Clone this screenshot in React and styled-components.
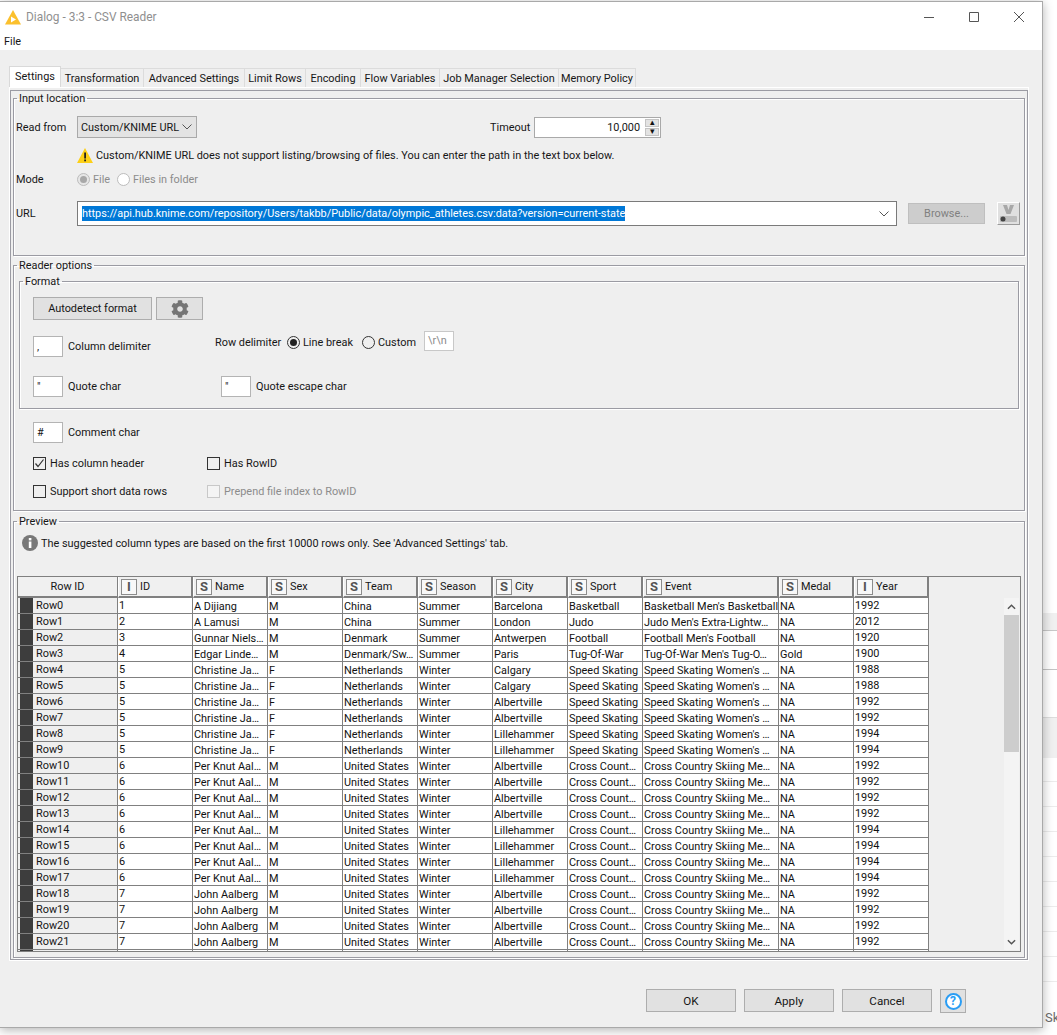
import React from "react";
import styled, { createGlobalStyle } from "styled-components";
import { FaCog } from "react-icons/fa";

const GlobalStyle = createGlobalStyle`
html, body {
    margin: 0;
    padding: 0;
    background: #fff;
}
body {
    font-family: Roboto, "Liberation Sans", sans-serif;
    font-size: 10.9px;
    color: #161616;
}
* {
    box-sizing: border-box;
}
`;

const TABS = [
    { name: "Settings", width: 52, active: true },
    { name: "Transformation", width: 83 },
    { name: "Advanced Settings", width: 101 },
    { name: "Limit Rows", width: 61 },
    { name: "Encoding", width: 55 },
    { name: "Flow Variables", width: 79 },
    { name: "Job Manager Selection", width: 119 },
    { name: "Memory Policy", width: 77 },
];

const COLUMNS = [
    { name: "ID", type: "I", width: 75 },
    { name: "Name", type: "S", width: 75 },
    { name: "Sex", type: "S", width: 75 },
    { name: "Team", type: "S", width: 75 },
    { name: "Season", type: "S", width: 75 },
    { name: "City", type: "S", width: 75 },
    { name: "Sport", type: "S", width: 75 },
    { name: "Event", type: "S", width: 136 },
    { name: "Medal", type: "S", width: 75 },
    { name: "Year", type: "I", width: 75 },
];

const skate = (city, year) => [5, "Christine Ja…", "F", "Netherlands", "Winter", city, "Speed Skating", "Speed Skating Women's …", "NA", year];
const ski = (city, year) => [6, "Per Knut Aal…", "M", "United States", "Winter", city, "Cross Count…", "Cross Country Skiing Me…", "NA", year];
const john = () => [7, "John Aalberg", "M", "United States", "Winter", "Albertville", "Cross Count…", "Cross Country Skiing Me…", "NA", 1992];

const ROWS = [
    [1, "A Dijiang", "M", "China", "Summer", "Barcelona", "Basketball", "Basketball Men's Basketball", "NA", 1992],
    [2, "A Lamusi", "M", "China", "Summer", "London", "Judo", "Judo Men's Extra-Lightw…", "NA", 2012],
    [3, "Gunnar Niels…", "M", "Denmark", "Summer", "Antwerpen", "Football", "Football Men's Football", "NA", 1920],
    [4, "Edgar Linde…", "M", "Denmark/Sw…", "Summer", "Paris", "Tug-Of-War", "Tug-Of-War Men's Tug-O…", "Gold", 1900],
    skate("Calgary", 1988),
    skate("Calgary", 1988),
    skate("Albertville", 1992),
    skate("Albertville", 1992),
    skate("Lillehammer", 1994),
    skate("Lillehammer", 1994),
    ski("Albertville", 1992),
    ski("Albertville", 1992),
    ski("Albertville", 1992),
    ski("Albertville", 1992),
    ski("Lillehammer", 1994),
    ski("Lillehammer", 1994),
    ski("Lillehammer", 1994),
    ski("Lillehammer", 1994),
    john(),
    john(),
    john(),
    john(),
];

const BACK_ROWS = [
    { height: 613 },
    { height: 18, band: true, line: "#c8c8c8" },
    { height: 39, line: "#c4c4c4" },
    { height: 47 },
    { height: 41, band: true, top: true },
    { height: 24, line: "#ececec" },
    { height: 25, line: "#ececec" },
    { height: 25, line: "#ececec" },
    { height: 25, line: "#ececec" },
    { height: 25, line: "#ececec" },
    { height: 25, line: "#ececec" },
    { height: 25, line: "#ececec" },
    { height: 25, line: "#ececec" },
    { height: 25, line: "#ececec" },
];

export default function App() {
    return (
        <Desktop>
            <GlobalStyle />
            <Window>
                <TitleBar>
                    <TitleIcon viewBox="0 0 16 15">
                        <path d="M8 0 L16 14.5 L0 14.5 Z" fill="#fbc02d" />
                        <path d="M6 6.5 L11 9.5 L6 12.5 Z" fill="#fff" />
                    </TitleIcon>
                    <TitleText>Dialog - 3:3 - CSV Reader</TitleText>
                    <WindowButtons>
                        <WindowButton viewBox="0 0 10 10"><path d="M0 5.5 H10" /></WindowButton>
                        <WindowButton viewBox="0 0 10 10"><path d="M.5 .5 H9.5 V9.5 H.5 Z" /></WindowButton>
                        <WindowButton viewBox="0 0 10 10"><path d="M0 0 L10 10 M10 0 L0 10" /></WindowButton>
                    </WindowButtons>
                </TitleBar>
                <MenuBar>File</MenuBar>
                <Body>
                    <TabStrip>
                        {TABS.map((tab) => (
                            <Tab key={tab.name} $width={tab.width} $active={tab.active}>{tab.name}</Tab>
                        ))}
                    </TabStrip>
                    <TabPane>
                        <PaneFrame>
                            <Group $height={165}>
                                <Legend>Input location</Legend>
                                <GroupBody $pad={2}>
                                    <FormRow $top={11} $height={22}>
                                        <RowLabel>Read from</RowLabel>
                                        <SelectBox>
                                            Custom/KNIME URL
                                            <Chevron />
                                        </SelectBox>
                                        <TimeoutLabel>Timeout</TimeoutLabel>
                                        <Spinner>
                                            <SpinnerValue>10,000</SpinnerValue>
                                            <SpinnerButtons>
                                                <SpinnerButton>▴</SpinnerButton>
                                                <SpinnerButton>▾</SpinnerButton>
                                            </SpinnerButtons>
                                        </Spinner>
                                    </FormRow>
                                    <FormRow $top={9} $height={16}>
                                        <RowLabel />
                                        <WarningIcon viewBox="0 0 16 15">
                                            <path d="M8 0 L16 15 L0 15 Z" fill="#fdd017" />
                                            <rect x="7.2" y="4.5" width="1.8" height="6" fill="#222" />
                                            <rect x="7.2" y="11.5" width="1.8" height="1.8" fill="#222" />
                                        </WarningIcon>
                                        <span>Custom/KNIME URL does not support listing/browsing of files. You can enter the path in the text box below.</span>
                                    </FormRow>
                                    <FormRow $top={8} $height={16}>
                                        <RowLabel>Mode</RowLabel>
                                        <Radio $checked $disabled />
                                        <OptionText $disabled $width={24}>File</OptionText>
                                        <Radio $disabled />
                                        <OptionText $disabled>Files in folder</OptionText>
                                    </FormRow>
                                    <FormRow $top={14} $height={25}>
                                        <RowLabel>URL</RowLabel>
                                        <UrlBox>
                                            <SelectedText>https://api.hub.knime.com/repository/Users/takbb/Public/data/olympic_athletes.csv:data?version=current-state</SelectedText>
                                            <Chevron />
                                        </UrlBox>
                                        <BrowseButton>Browse...</BrowseButton>
                                        <FlowVarButton>
                                            <svg width="21" height="21" viewBox="0 0 21 21">
                                                <path d="M5 2 H9 L10.5 7 L12 2 H16 L12.5 11 H8.5 Z" fill="#a8a8a8" />
                                                <rect x="2" y="13" width="17" height="6" rx="1" fill="#bdbdbd" />
                                                <circle cx="5" cy="16" r="2.5" fill="#444" />
                                            </svg>
                                        </FlowVarButton>
                                    </FormRow>
                                </GroupBody>
                            </Group>
                            <Group $top={2} $height={253}>
                                <Legend>Reader options</Legend>
                                <Group $top={2} $side={5} $height={135}>
                                    <Legend>Format</Legend>
                                    <GroupBody $pad={13}>
                                        <FormRow $top={9} $height={23}>
                                            <PlainButton $width={119}>Autodetect format</PlainButton>
                                            <PlainButton $width={47} $left={4}><FaCog size={18} color="#757575" /></PlainButton>
                                        </FormRow>
                                        <FormRow $top={11} $height={26} $start>
                                            <CharField $width={182} $top={5}>
                                                <CharBox>,</CharBox>
                                                <span>Column delimiter</span>
                                            </CharField>
                                            <RowDelimiter>
                                                <DelimiterLabel>Row delimiter</DelimiterLabel>
                                                <Radio $checked />
                                                <OptionText $width={59}>Line break</OptionText>
                                                <Radio />
                                                <OptionText $width={46}>Custom</OptionText>
                                                <CustomBox>\r\n</CustomBox>
                                            </RowDelimiter>
                                        </FormRow>
                                        <FormRow $top={19} $height={21} $start>
                                            <CharField $width={188}>
                                                <CharBox>"</CharBox>
                                                <span>Quote char</span>
                                            </CharField>
                                            <CharField>
                                                <CharBox>"</CharBox>
                                                <span>Quote escape char</span>
                                            </CharField>
                                        </FormRow>
                                    </GroupBody>
                                </Group>
                                <GroupBody $pad={19}>
                                    <OptionBlock>
                                        <CharField>
                                            <CharBox>#</CharBox>
                                            <span>Comment char</span>
                                        </CharField>
                                        <CheckRow $top={14}>
                                            <CheckCell>
                                                <CheckBox $checked>
                                                    <svg width="11" height="11" viewBox="0 0 11 11">
                                                        <path d="M1.5 5.5 L4 8.5 L9.5 1.5" fill="none" stroke="#333" strokeWidth="1.2" />
                                                    </svg>
                                                </CheckBox>
                                                Has column header
                                            </CheckCell>
                                            <CheckCell>
                                                <CheckBox />
                                                Has RowID
                                            </CheckCell>
                                        </CheckRow>
                                        <CheckRow $top={15}>
                                            <CheckCell>
                                                <CheckBox />
                                                Support short data rows
                                            </CheckCell>
                                            <CheckCell $disabled>
                                                <CheckBox $disabled />
                                                Prepend file index to RowID
                                            </CheckCell>
                                        </CheckRow>
                                    </OptionBlock>
                                </GroupBody>
                            </Group>
                            <Group $top={3}>
                                <Legend>Preview</Legend>
                                <GroupBody $pad={3} $bottom={5}>
                                    <InfoRow>
                                        <svg width="16" height="16" viewBox="0 0 16 16">
                                            <circle cx="8" cy="8" r="8" fill="#787878" />
                                            <rect x="6.8" y="6.5" width="2.6" height="6.5" fill="#fff" />
                                            <rect x="6.8" y="3" width="2.6" height="2.4" fill="#fff" />
                                        </svg>
                                        The suggested column types are based on the first 10000 rows only. See 'Advanced Settings' tab.
                                    </InfoRow>
                                    <TableFrame>
                                        <DataTable>
                                            <thead>
                                                <tr>
                                                    <RowIdHead>Row ID</RowIdHead>
                                                    {COLUMNS.map((col) => (
                                                        <HeadCell key={col.name} $width={col.width}>
                                                            <HeadContent>
                                                                <TypeBadge>{col.type}</TypeBadge>
                                                                {col.name}
                                                            </HeadContent>
                                                        </HeadCell>
                                                    ))}
                                                </tr>
                                            </thead>
                                            <tbody>
                                                {ROWS.map((row, index) => (
                                                    <tr key={index}>
                                                        <RowIdCell>
                                                            <RowIdContent>
                                                                <RowMarker />
                                                                Row{index}
                                                            </RowIdContent>
                                                        </RowIdCell>
                                                        {row.map((value, i) => (
                                                            <DataCell key={i} $number={typeof value === "number"}>{value}</DataCell>
                                                        ))}
                                                    </tr>
                                                ))}
                                                {/* next row, only its top edge shows above the frame */}
                                                <tr>
                                                    <RowIdCell>
                                                        <RowIdContent>
                                                            <RowMarker />
                                                        </RowIdContent>
                                                    </RowIdCell>
                                                    {COLUMNS.map((col) => (
                                                        <DataCell key={col.name} />
                                                    ))}
                                                </tr>
                                            </tbody>
                                        </DataTable>
                                        <ScrollTrack>
                                            <ScrollArrow viewBox="0 0 10 6"><path d="M1 5 L5 1 L9 5" /></ScrollArrow>
                                            <ScrollThumb />
                                            <ScrollArrow viewBox="0 0 10 6"><path d="M1 1 L5 5 L9 1" /></ScrollArrow>
                                        </ScrollTrack>
                                    </TableFrame>
                                </GroupBody>
                            </Group>
                        </PaneFrame>
                    </TabPane>
                    <Footer>
                        <FooterButton>OK</FooterButton>
                        <FooterButton>Apply</FooterButton>
                        <FooterButton>Cancel</FooterButton>
                        <HelpButton><HelpGlyph>?</HelpGlyph></HelpButton>
                    </Footer>
                </Body>
            </Window>
            <Backdrop>
                {BACK_ROWS.map((row, i) => (
                    <BackRow key={i} $height={row.height} $band={row.band} $line={row.line} $top={row.top} />
                ))}
                <BackText>Sk</BackText>
            </Backdrop>
        </Desktop>
    );
}

function Chevron() {
    return (
        <ChevronIcon viewBox="0 0 10 6">
            <path d="M.5 .5 L5 5 L9.5 .5" />
        </ChevronIcon>
    );
}

const Desktop = styled.div`
display: flex;
width: 1057px;
height: 1035px;
overflow: hidden;
background: #fff;
`;

const Window = styled.div`
position: relative;
z-index: 1;
display: flex;
flex-direction: column;
flex: none;
width: 1043px;
height: 1027px;
margin-top: 1px;
border-top: 1px solid #a9a9a9;
border-right: 1px solid #a9a9a9;
border-bottom: 1px solid #a9a9a9;
box-shadow: 0 2px 10px rgba(0, 0, 0, 0.3);
background: #fff;
`;

const TitleBar = styled.div`
display: flex;
align-items: center;
height: 29px;
padding-left: 5px;
`;

const TitleIcon = styled.svg`
width: 16px;
height: 15px;
margin-top: 1px;
`;

const TitleText = styled.span`
margin-left: 5px;
font-size: 11.9px;
color: #8f8f8f;
`;

const WindowButtons = styled.div`
display: flex;
gap: 35px;
margin-left: auto;
margin-right: 18px;
`;

const WindowButton = styled.svg`
width: 10px;
height: 10px;
fill: none;
stroke: #555;
stroke-width: 1;
`;

const MenuBar = styled.div`
height: 19px;
padding-left: 4px;
line-height: 22px;
`;

const Body = styled.div`
flex: 1;
display: flex;
flex-direction: column;
padding: 16px 13px 0 9px;
background: #efefef;
`;

const TabStrip = styled.div`
display: flex;
align-items: flex-end;
height: 21px;
`;

const Tab = styled.div`
display: flex;
align-items: center;
justify-content: center;
width: ${(p) => p.$width}px;
height: ${(p) => (p.$active ? 21 : 19)}px;
padding-bottom: ${(p) => (p.$active ? 2 : 0)}px;
border: 1px solid ${(p) => (p.$active ? "#d9d9d9" : "#dcdcdc")};
border-bottom: none;
border-left: ${(p) => (p.$active ? "1px solid #d9d9d9" : "none")};
background: ${(p) => (p.$active ? "#fff" : "#efefef")};
white-space: nowrap;
`;

const TabPane = styled.div`
border: 1px solid #fff;
padding-top: 2px;
`;

const PaneFrame = styled.div`
border: 1px solid #9b9ba3;
padding: 0 2px 1px;
`;

const Group = styled.fieldset`
min-width: 0;
margin: ${(p) => p.$top || 0}px ${(p) => p.$side || 0}px 0;
padding: 0;
border: 1px solid #9b9ba3;
box-shadow: inset 1px 1px 0 #fff, 1px 1px 0 #fff;
height: ${(p) => (p.$height ? `${p.$height}px` : "auto")};
`;

const GroupBody = styled.div`
padding: 0 0 ${(p) => p.$bottom || 0}px ${(p) => p.$pad}px;
`;

const Legend = styled.legend`
padding: 0 2px;
margin-left: 3px;
height: 14px;
line-height: 16px;
`;

const FormRow = styled.div`
display: flex;
align-items: ${(p) => (p.$start ? "flex-start" : "center")};
height: ${(p) => p.$height}px;
margin-top: ${(p) => p.$top}px;
`;

const RowLabel = styled.span`
flex: none;
width: 61px;
`;

const ChevronIcon = styled.svg`
flex: none;
width: 10px;
height: 6px;
fill: none;
stroke: #555;
stroke-width: 1;
`;

const SelectBox = styled.div`
display: flex;
align-items: center;
justify-content: space-between;
width: 120px;
height: 22px;
padding: 0 4px 0 3px;
border: 1px solid #a9a9a9;
background: #e3e3e3;
white-space: nowrap;
`;

const TimeoutLabel = styled.span`
width: 44px;
margin-left: 293px;
`;

const Spinner = styled.div`
display: flex;
align-items: stretch;
width: 127px;
height: 21px;
border: 1px solid #a9a9a9;
background: #fff;
`;

const SpinnerValue = styled.div`
flex: 1;
padding-right: 4px;
text-align: right;
line-height: 19px;
`;

const SpinnerButtons = styled.div`
display: flex;
flex-direction: column;
justify-content: center;
gap: 1px;
width: 16px;
padding: 1px;
`;

const SpinnerButton = styled.div`
flex: 1;
display: flex;
align-items: center;
justify-content: center;
background: #e3e3e3;
border: 1px solid #c4c4c4;
font-size: 9px;
line-height: 1;
color: #111;
overflow: hidden;
`;

const WarningIcon = styled.svg`
flex: none;
width: 16px;
height: 15px;
margin-right: 3px;
`;

const Radio = styled.span`
position: relative;
flex: none;
width: 13px;
height: 13px;
border: 1px solid ${(p) => (p.$disabled ? "#bcbcbc" : "#333")};
border-radius: 50%;
background: ${(p) => (p.$disabled && p.$checked ? "#e6e6e6" : p.$disabled ? "#fff" : "transparent")};
&::after {
    content: "";
    display: ${(p) => (p.$checked ? "block" : "none")};
    position: absolute;
    inset: 2px;
    border-radius: 50%;
    background: ${(p) => (p.$disabled ? "#a8a8a8" : "#222")};
}
`;

const OptionText = styled.span`
flex: none;
width: ${(p) => (p.$width ? `${p.$width}px` : "auto")};
margin-left: 3px;
color: ${(p) => (p.$disabled ? "#8c8c8c" : "inherit")};
`;

const UrlBox = styled.div`
display: flex;
align-items: center;
justify-content: space-between;
flex: none;
width: 820px;
height: 25px;
padding: 0 7px 0 4px;
border: 1px solid #7a7a7a;
background: #fff;
`;

const SelectedText = styled.span`
height: 15px;
line-height: 15px;
background: #0078d7;
color: #fff;
white-space: nowrap;
`;

const BrowseButton = styled.div`
display: flex;
align-items: center;
justify-content: center;
flex: none;
width: 77px;
height: 21px;
margin-left: 11px;
border: 1px solid #bfbfbf;
background: #cdcdcd;
color: #808080;
`;

const FlowVarButton = styled.div`
display: flex;
align-items: center;
justify-content: center;
flex: none;
width: 23px;
height: 23px;
margin-left: 12px;
border: 1px solid #fff;
border-right-color: #9a9a9a;
border-bottom-color: #9a9a9a;
background: #e0e0e0;
`;

const PlainButton = styled.div`
display: flex;
align-items: center;
justify-content: center;
width: ${(p) => p.$width}px;
height: 23px;
margin-left: ${(p) => p.$left || 0}px;
border: 1px solid #adadad;
background: #e1e1e1;
`;

const CharField = styled.div`
display: flex;
align-items: center;
gap: 5px;
width: ${(p) => (p.$width ? `${p.$width}px` : "auto")};
margin-top: ${(p) => p.$top || 0}px;
`;

const CharBox = styled.div`
width: 30px;
height: 21px;
padding-left: 3px;
border: 1px solid #b4b4b4;
background: #fff;
line-height: 19px;
`;

const RowDelimiter = styled.div`
display: flex;
align-items: center;
height: 22px;
`;

const DelimiterLabel = styled.span`
flex: none;
width: 72px;
`;

const CustomBox = styled.div`
align-self: flex-start;
width: 30px;
height: 20px;
padding-left: 3px;
border: 1px solid #c8c8c8;
background: #fff;
color: #8c8c8c;
line-height: 18px;
`;

const OptionBlock = styled.div`
margin-top: 13px;
`;

const CheckRow = styled.div`
display: grid;
grid-template-columns: 174px 1fr;
margin-top: ${(p) => p.$top}px;
`;

const CheckCell = styled.label`
display: flex;
align-items: center;
gap: 4px;
height: 13px;
color: ${(p) => (p.$disabled ? "#8c8c8c" : "inherit")};
`;

const CheckBox = styled.span`
display: flex;
align-items: center;
justify-content: center;
flex: none;
width: 13px;
height: 13px;
border: 1px solid ${(p) => (p.$disabled ? "#c8c8c8" : "#333")};
background: ${(p) => (p.$disabled ? "#f4f4f4" : "transparent")};
`;

const InfoRow = styled.div`
display: flex;
align-items: center;
gap: 3px;
height: 16px;
margin-top: 7px;
margin-left: 5px;
`;

const TableFrame = styled.div`
display: flex;
justify-content: space-between;
width: 1004px;
height: 376px;
margin-top: 25px;
border: 1px solid #808080;
overflow: hidden;
`;

const DataTable = styled.table`
table-layout: fixed;
flex: none;
width: 911px;
height: 0;
border-collapse: separate;
border-spacing: 0;
`;

const RowIdHead = styled.th`
width: 100px;
height: 21px;
padding: 0;
border-right: 1px solid #808080;
border-bottom: 2px solid #808080;
background: #f0f0f0;
font-weight: 400;
text-align: center;
`;

const HeadCell = styled.th`
width: ${(p) => p.$width}px;
height: 21px;
padding: 0 0 0 2px;
border-left: 1px solid #fff;
border-right: 2px solid #808080;
border-bottom: 2px solid #808080;
background: #f0f0f0;
font-weight: 400;
text-align: left;
`;

const HeadContent = styled.div`
display: flex;
align-items: center;
gap: 3px;
`;

const TypeBadge = styled.span`
display: flex;
align-items: center;
justify-content: center;
width: 16px;
height: 16px;
border: 1px solid #8c8c8c;
background: #f8f8f8;
color: #555;
font-weight: 700;
font-size: 13px;
line-height: 1;
`;

const RowIdCell = styled.td`
height: 16px;
padding: 0;
background: #efefef;
border-right: 1px solid #808080;
border-bottom: 1px solid #808080;
`;

const RowIdContent = styled.div`
display: flex;
align-items: center;
gap: 3px;
height: 15px;
padding-left: 2px;
line-height: 14px;
`;

const RowMarker = styled.span`
width: 13px;
height: 15px;
background: #3d3d3d;
`;

const DataCell = styled.td`
height: 16px;
padding: ${(p) => (p.$number ? "1px 0 1px 1px" : "2px 0 0 1px")};
border-right: 1px solid #808080;
border-bottom: 1px solid #808080;
background: #fff;
color: #111;
line-height: 13px;
white-space: nowrap;
overflow: hidden;
`;

const ScrollTrack = styled.div`
display: flex;
flex-direction: column;
align-items: center;
flex: none;
width: 15px;
height: 352px;
margin: 21px 1px 0 0;
background: #f4f4f4;
`;

const ScrollArrow = styled.svg`
flex: none;
width: 9px;
height: 6px;
margin: 6px 0 5px;
fill: none;
stroke: #555;
stroke-width: 1.6;
`;

const ScrollThumb = styled.div`
width: 100%;
height: 137px;
margin-bottom: auto;
background: #cdcdcd;
`;

const Footer = styled.div`
display: flex;
align-items: flex-start;
justify-content: flex-end;
gap: 8px;
margin-top: 28px;
margin-right: 63px;
`;

const FooterButton = styled.div`
display: flex;
align-items: center;
justify-content: center;
width: 90px;
height: 23px;
border: 1px solid #adadad;
background: #e1e1e1;
font-size: 11.6px;
`;

const HelpButton = styled.div`
display: flex;
align-items: center;
justify-content: center;
width: 26px;
height: 24px;
border: 1px solid #adadad;
background: #e1e1e1;
`;

const HelpGlyph = styled.span`
display: flex;
align-items: center;
justify-content: center;
width: 17px;
height: 17px;
border: 2px solid #2a9df4;
border-radius: 50%;
background: #fff;
color: #2a9df4;
font-weight: 700;
font-size: 12px;
line-height: 1;
`;

const Backdrop = styled.div`
flex: 1;
min-width: 0;
overflow: hidden;
display: flex;
flex-direction: column;
`;

const BackRow = styled.div`
flex: none;
height: ${(p) => p.$height}px;
background: ${(p) => (p.$band ? "#f0f0f0" : "#fff")};
border-bottom: 1px solid ${(p) => p.$line || "transparent"};
border-top: ${(p) => (p.$top ? "1px solid #dddddd" : "none")};
`;

const BackText = styled.div`
margin-top: 28px;
padding-left: 2px;
font-size: 13px;
line-height: 16px;
color: #6b6b6b;
white-space: nowrap;
`;
